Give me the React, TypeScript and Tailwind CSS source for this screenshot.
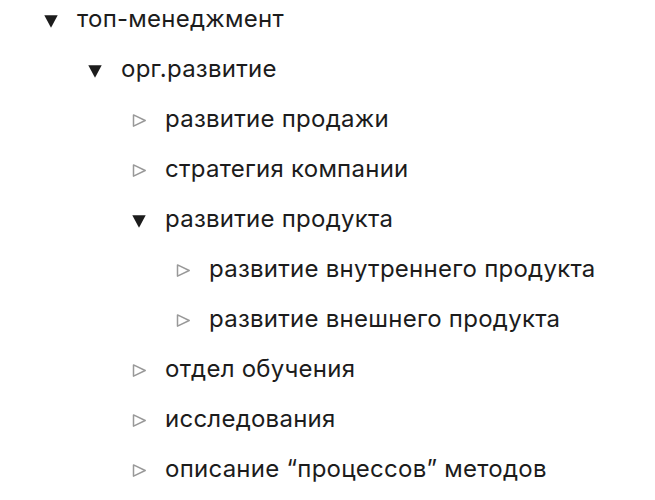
import React from "react";

type Item = { label: string; level: number; open: boolean };

const items: Item[] = [
  { label: "топ-менеджмент", level: 0, open: true },
  { label: "орг.развитие", level: 1, open: true },
  { label: "развитие продажи", level: 2, open: false },
  { label: "стратегия компании", level: 2, open: false },
  { label: "развитие продукта", level: 2, open: true },
  { label: "развитие внутреннего продукта", level: 3, open: false },
  { label: "развитие внешнего продукта", level: 3, open: false },
  { label: "отдел обучения", level: 2, open: false },
  { label: "исследования", level: 2, open: false },
  { label: "описание “процессов” методов", level: 2, open: false },
];

const indent = ["pl-[44px]", "pl-[88px]", "pl-[132px]", "pl-[176px]"];

const Arrow: React.FC<{ open: boolean }> = ({ open }) =>
  open ? (
    <svg width="14" height="13" viewBox="0 0 14 13" className="shrink-0 mt-[10px]">
      <path d="M0.3 0.3 H13.7 L7 12.8 Z" fill="#1c1c1c" />
    </svg>
  ) : (
    <svg width="14" height="13" viewBox="0 0 14 13" className="shrink-0 mt-[9px]">
      <path d="M1.5 0.9 L13.2 6.5 L1.5 12.1 Z" fill="none" stroke="#999999" strokeWidth="1.5" strokeLinejoin="round" />
    </svg>
  );

const App: React.FC = () => {
  return (
    <div className="w-[655px] h-[500px] bg-white overflow-hidden font-['Inter',sans-serif] text-[24px] leading-[28px] tracking-[0.25px] text-[#1c1c1c]">
      <ul className="flex flex-col gap-[22px] pt-[5px]">
        {items.map((item, i) => (
          <li key={i} className={`flex items-start gap-[19px] ${indent[item.level]}`}>
            <Arrow open={item.open} />
            <span>{item.label}</span>
          </li>
        ))}
      </ul>
    </div>
  );
};

export default App;
